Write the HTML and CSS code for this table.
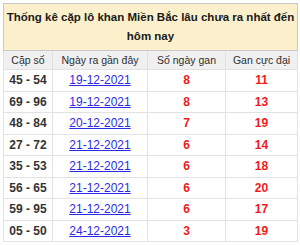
FILE: index.html
```html
<!DOCTYPE html>
<html>
<head>
<meta charset="utf-8">
<link rel="stylesheet" href="styles.css">
</head>
<body>
<div class="wrap">
<table class="tk">
  <colgroup>
    <col class="c1"><col class="c2"><col class="c3"><col class="c4">
  </colgroup>
  <thead>
    <tr><th class="title" colspan="4">Thống kê cặp lô khan Miền Bắc lâu chưa ra nhất đến hôm nay</th></tr>
    <tr class="head"><th>Cặp số</th><th>Ngày ra gần đây</th><th>Số ngày gan</th><th>Gan cực đại</th></tr>
  </thead>
  <tbody>
    <tr><td class="pair">45 - 54</td><td><a href="#">19-12-2021</a></td><td class="num">8</td><td class="num">11</td></tr>
    <tr><td class="pair">69 - 96</td><td><a href="#">19-12-2021</a></td><td class="num">8</td><td class="num">13</td></tr>
    <tr><td class="pair">48 - 84</td><td><a href="#">20-12-2021</a></td><td class="num">7</td><td class="num">19</td></tr>
    <tr><td class="pair">27 - 72</td><td><a href="#">21-12-2021</a></td><td class="num">6</td><td class="num">14</td></tr>
    <tr><td class="pair">35 - 53</td><td><a href="#">21-12-2021</a></td><td class="num">6</td><td class="num">18</td></tr>
    <tr><td class="pair">56 - 65</td><td><a href="#">21-12-2021</a></td><td class="num">6</td><td class="num">20</td></tr>
    <tr><td class="pair">59 - 95</td><td><a href="#">21-12-2021</a></td><td class="num">6</td><td class="num">17</td></tr>
    <tr><td class="pair">05 - 50</td><td><a href="#">24-12-2021</a></td><td class="num">3</td><td class="num">19</td></tr>
  </tbody>
</table>
</div>
</body>
</html>
```

FILE: styles.css
```css
html, body { margin: 0; padding: 0; background: #fff; }
body { font-family: "Liberation Sans", Arial, sans-serif; }
.wrap { padding: 3px 3px 0 3px; }
.tk {
  width: 294px;
  border-collapse: collapse;
  border: 1px solid #9a9a9a;
  table-layout: fixed;
}
.c1 { width: 49px; }
.c2 { width: 95px; }
.c3 { width: 78px; }
.c4 { width: 72px; }
.tk th, .tk td {
  border: 1px solid #e2e2e2;
  text-align: center;
  padding: 0;
  white-space: nowrap;
}
.tk .title {
  background: #fcf0cc;
  color: #1a1a1a;
  font-weight: bold;
  font-size: 11.5px;
  line-height: 19px;
  height: 38px;
  padding: 4px 0 4px 0;
  white-space: normal;
  border: 1px solid #c8c8c8;
}
.tk .head th {
  background: #f0f0f0;
  font-weight: normal;
  color: #2e2e2e;
  font-size: 10.5px;
  height: 18px;
  line-height: 18px;
}
.tk td {
  height: 20.5px;
  font-size: 12px;
  line-height: 14px;
}
.tk td.pair { font-weight: bold; color: #333; }
.tk td a { color: #2a2ae8; text-decoration: underline; }
.tk td.num { font-weight: bold; color: #f01a1a; }
```
